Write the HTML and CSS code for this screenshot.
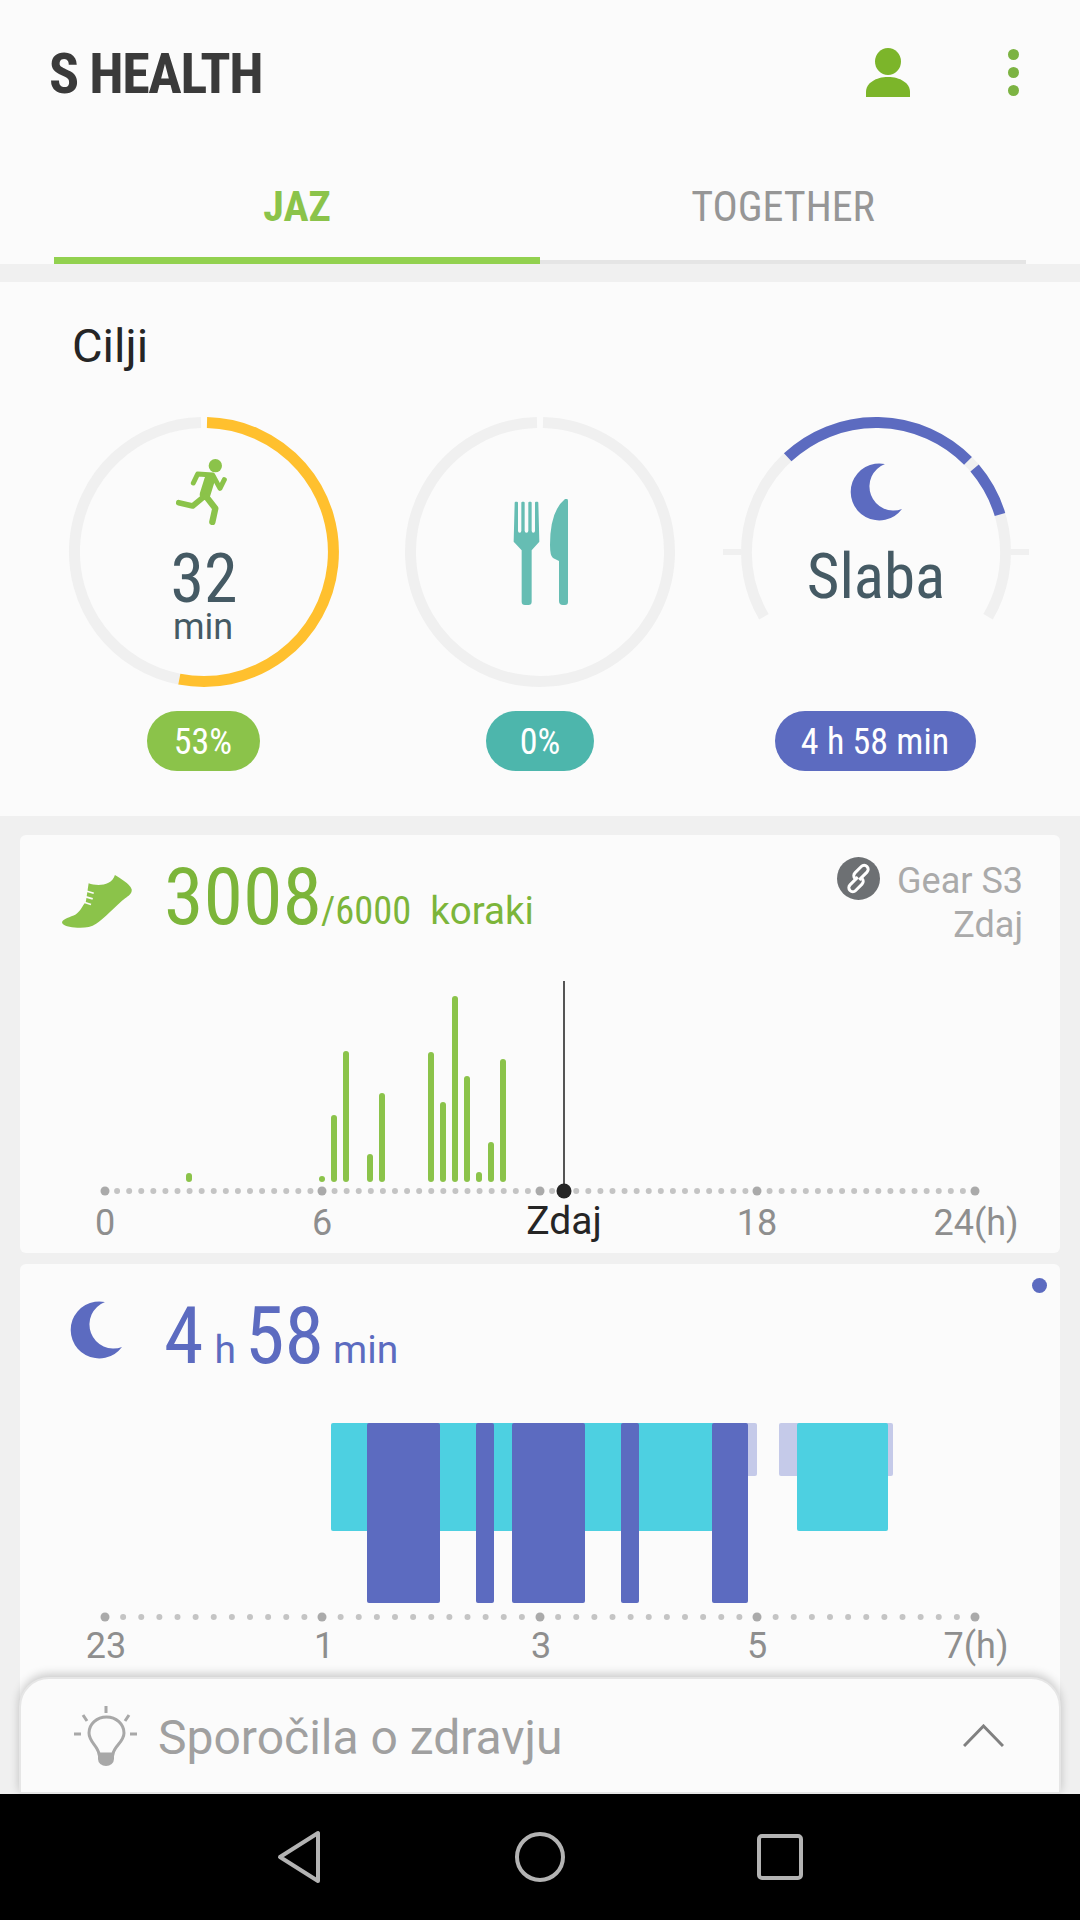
FILE: index.html
```html
<!DOCTYPE html>
<html lang="en">
<head>
  <meta charset="UTF-8" />
  <meta name="viewport" content="width=device-width, initial-scale=1.0" />
  <title>S Health</title>
  <link rel="stylesheet" href="styles.css">
</head>
<body>
  <div class="screen">
    <main class="content">
      <header class="topbar">
        <h1 class="title">S HEALTH</h1>
        <svg class="icon-profile" viewBox="866 48 44 49">
          <ellipse cx="888" cy="61.5" rx="13" ry="13.5" />
          <path d="M866 97 V92 C866 83 876 77 888 77 C900 77 910 83 910 92 V97 Z" />
        </svg>
        <div class="more"><span></span><span></span><span></span></div>
      </header>

      <nav class="tabs">
        <div class="tab active">JAZ</div>
        <div class="tab">TOGETHER</div>
      </nav>

      <section class="goals">
        <h2>Cilji</h2>
        <div class="rings">
          <div class="goal">
            <div class="ring">
              <svg viewBox="-153 -135 306 270" width="306" height="270">
                <path class="track" d="M-24.7 127.1 A129.5 129.5 0 0 1 -3 -129.5" />
                <path class="arc-yellow" d="M3 -129.5 A129.5 129.5 0 1 1 -24.7 127.1" />
              </svg>
              <div class="ring-body">
                <svg class="icon-run" viewBox="405 178 153 198">
                  <circle cx="523" cy="198" r="20" fill="#8bc34a" />
                  <path class="limb" stroke-width="15" d="M457 250 L470 223 L515 226 L537 266 L550 240" />
                  <path class="limb" stroke-width="32" d="M506 240 L492 285" />
                  <path class="limb" stroke-width="17" d="M490 290 L455 319 L413 309" />
                  <path class="limb" stroke-width="19" d="M495 290 L523 326 L514 367" />
                </svg>
                <div class="num cond">32</div>
                <div class="unit">min</div>
              </div>
            </div>
            <div class="pill pill-green cond">53%</div>
          </div>

          <div class="goal">
            <div class="ring">
              <svg viewBox="-153 -135 306 270" width="306" height="270">
                <path class="track" d="M3 -129.5 A129.5 129.5 0 1 1 -3 -129.5" />
              </svg>
              <div class="ring-body center">
                <svg class="icon-food" viewBox="513 499 55 106">
                  <g transform="translate(513 499) scale(.3333) translate(-1418 -297)">
                    <path d="M1423 308 Q1423 305 1426 305 H1430 Q1433 305 1433 308 V392 Q1433 398 1438 398 Q1443 398 1443 392 V308 Q1443 305 1446 305 H1450 Q1453 305 1453 308 V392 Q1453 398 1458.5 398 Q1464 398 1464 392 V308 Q1464 305 1467 305 H1471 Q1474 305 1474 308 V392 Q1474 398 1479 398 Q1484 398 1484 392 V308 Q1484 305 1487 305 H1491 Q1494 305 1494 308 L1497 425 L1474 451 V605 Q1474 615 1464 615 H1454 Q1444 615 1444 605 V451 L1420 425 Z" />
                  </g>
                  <path d="M568 501 Q568 498 565 499 Q550 511 550 545 Q550 556 553 558 L559 561 V601 Q559 605 563 605 H565 Q568 605 568 602 Z" />
                </svg>
              </div>
            </div>
            <div class="pill pill-teal cond">0%</div>
          </div>

          <div class="goal">
            <div class="ring">
              <svg viewBox="-153 -135 306 270" width="306" height="270">
                <path class="track" d="M-112.1 64.8 A129.5 129.5 0 1 1 112.1 64.8" />
                <path class="tick" d="M-153 0 H-135 M135 0 H153" />
                <path class="arc-blue" d="M-88.3 -94.7 A129.5 129.5 0 0 1 92 -91.1" />
                <path class="arc-blue" d="M98.6 -84 A129.5 129.5 0 0 1 124 -37.5" />
              </svg>
              <div class="ring-body sleep">
                <svg class="icon-moon" viewBox="849 463 53 59">
                  <path d="M884 464 A28.5 28.5 0 1 0 901 509 A24 24 0 0 1 884 464 Z" />
                </svg>
                <div class="sleep-word cond">Slaba</div>
              </div>
            </div>
            <div class="pill pill-blue cond">4 h 58 min</div>
          </div>
        </div>
      </section>

      <section class="card steps">
        <div class="card-head">
          <svg class="icon-shoe" viewBox="180 165 205 160" preserveAspectRatio="none">
            <path d="M335 165 C350 175 378 190 384 208 C386 220 375 228 365 235 C340 255 300 300 280 312 C265 323 245 325 225 324 C205 324 180 318 180 308 C182 296 205 292 220 284 C235 274 240 258 250 245 L258 190 C280 198 325 200 335 165 Z" />
            <path class="laces" d="M253 214 L273 220 M250 231 L270 237 M247 248 L265 254" />
          </svg>
          <div class="metric green">
            <span class="big cond">3008</span><span class="goal-num cond">/6000</span><span class="word">koraki</span>
          </div>
          <div class="source">
            <div class="source-line">
              <svg class="icon-link" viewBox="0 0 43 43">
                <circle cx="21.5" cy="21.5" r="21.5" fill="#6d7073" />
                <g transform="rotate(-45 21.5 21.5)">
                  <path d="M22 20 H11 a4 4 0 0 0 0 8 H20 a4 4 0 0 0 4 -4" />
                  <path d="M21 23 H32 a4 4 0 0 0 0 -8 H23 a4 4 0 0 0 -4 4" />
                </g>
              </svg>
              Gear S3
            </div>
            <div>Zdaj</div>
          </div>
        </div>
        <svg class="chart" viewBox="20 975 1040 278" width="1040" height="278">
          <g class="bars">
            <rect x="186" y="1173" width="6" height="9" rx="3" />
            <rect x="319" y="1176" width="6" height="6" rx="3" />
            <rect x="331" y="1115" width="6" height="67" rx="3" />
            <rect x="343" y="1051" width="6" height="131" rx="3" />
            <rect x="367" y="1154" width="6" height="28" rx="3" />
            <rect x="379" y="1093" width="6" height="89" rx="3" />
            <rect x="428" y="1052" width="6" height="130" rx="3" />
            <rect x="440" y="1102" width="6" height="80" rx="3" />
            <rect x="452" y="996" width="6" height="186" rx="3" />
            <rect x="464" y="1076" width="6" height="106" rx="3" />
            <rect x="476" y="1172" width="6" height="10" rx="3" />
            <rect x="488" y="1142" width="6" height="40" rx="3" />
            <rect x="500" y="1059" width="6" height="123" rx="3" />
          </g>
          <line class="dots" x1="105" y1="1191" x2="975" y2="1191" stroke-dasharray="0 12.083" />
          <g class="major">
            <circle cx="105" cy="1191" r="4.5" />
            <circle cx="322" cy="1191" r="4.5" />
            <circle cx="540" cy="1191" r="4.5" />
            <circle cx="757" cy="1191" r="4.5" />
            <circle cx="975" cy="1191" r="4.5" />
          </g>
          <line class="now-line" x1="564" y1="981" x2="564" y2="1191" />
          <circle class="now-dot" cx="564" cy="1191" r="7.5" />
          <g class="labels">
            <text x="105" y="1235">0</text>
            <text x="322" y="1235">6</text>
            <text class="now" x="564" y="1234">Zdaj</text>
            <text x="757" y="1235">18</text>
            <text x="976" y="1235">24(h)</text>
          </g>
        </svg>
      </section>

      <section class="card sleep-card">
        <span class="new-dot"></span>
        <div class="card-head tall">
          <svg class="icon-moon-small" viewBox="849 463 53 59">
            <path d="M884 464 A28.5 28.5 0 1 0 901 509 A24 24 0 0 1 884 464 Z" />
          </svg>
          <div class="metric blue">
            <span class="big cond">4</span><span class="word small">h</span><span class="big cond gap">58</span><span class="word small tight">min</span>
          </div>
        </div>
        <svg class="chart" viewBox="20 1410 1040 260" width="1040" height="260">
          <g class="light">
            <rect x="740" y="1423" width="17" height="53" rx="2" />
            <rect x="779" y="1423" width="114" height="53" rx="2" />
          </g>
          <g class="shallow">
            <rect x="331" y="1423" width="400" height="108" rx="2" />
            <rect x="797" y="1423" width="91" height="108" rx="2" />
          </g>
          <g class="deep">
            <rect x="367" y="1423" width="73" height="180" rx="2" />
            <rect x="476" y="1423" width="18" height="180" rx="2" />
            <rect x="512" y="1423" width="73" height="180" rx="2" />
            <rect x="621" y="1423" width="18" height="180" rx="2" />
            <rect x="712" y="1423" width="36" height="180" rx="2" />
          </g>
          <line class="dots" x1="105" y1="1617" x2="975" y2="1617" stroke-dasharray="0 18.125" />
          <g class="major">
            <circle cx="105" cy="1617" r="4.5" />
            <circle cx="322" cy="1617" r="4.5" />
            <circle cx="540" cy="1617" r="4.5" />
            <circle cx="757" cy="1617" r="4.5" />
            <circle cx="975" cy="1617" r="4.5" />
          </g>
          <g class="labels">
            <text x="106" y="1658">23</text>
            <text x="324" y="1658">1</text>
            <text x="541" y="1658">3</text>
            <text x="757" y="1658">5</text>
            <text x="976" y="1658">7(h)</text>
          </g>
        </svg>
      </section>

      <aside class="sheet">
        <svg class="icon-bulb" viewBox="72 1706 63 60">
          <path class="bulb-line" d="M97 1754 C96 1746 87 1742 87 1733 A17.5 16 0 0 1 122 1733 C122 1742 112 1746 111 1754 Z" />
          <path class="bulb-line" d="M104 1706 V1713 M81 1715 L85 1721 M127 1715 L123 1721 M72 1734 H79 M128 1734 H135" />
          <path class="bulb-base" d="M96 1754 H112 V1759 A8 7 0 0 1 96 1759 Z" />
        </svg>
        <span class="sheet-text">Sporočila o zdravju</span>
        <svg class="icon-chevron" viewBox="962 1724 41 23">
          <path d="M963 1746 L982.5 1726 L1002 1746" />
        </svg>
      </aside>
    </main>

    <footer class="navbar">
      <svg viewBox="0 0 46 54" width="46" height="54" class="nav-icon">
        <path d="M41 3 V51 L3 27 Z" />
      </svg>
      <svg viewBox="0 0 54 54" width="54" height="54" class="nav-icon">
        <circle cx="27" cy="27" r="23" />
      </svg>
      <svg viewBox="0 0 46 46" width="46" height="46" class="nav-icon">
        <rect x="2" y="2" width="42" height="42" rx="3" />
      </svg>
    </footer>
  </div>
</body>
</html>
```

FILE: styles.css
```css
* {
  box-sizing: border-box;
}
html, body {
  margin: 0;
  padding: 0;
}
body {
  width: 1080px;
  height: 1920px;
  overflow: hidden;
  font-family: Roboto, "Liberation Sans", sans-serif;
  background: #f0f0f0;
}
.screen {
  display: flex;
  flex-direction: column;
  height: 1920px;
}
.content {
  position: relative;
  flex: 1;
  overflow: hidden;
}
.cond {
  font-family: "Roboto Condensed", Roboto, sans-serif;
  font-stretch: condensed;
}

/* header */
.topbar {
  display: flex;
  align-items: center;
  height: 146px;
  padding-left: 49px;
  background: #fbfbfb;
}
.title {
  flex: 1;
  margin: 2px 0 0;
  font-family: "Roboto Condensed", Roboto, sans-serif;
  font-stretch: condensed;
  font-size: 56px;
  font-weight: 700;
  line-height: 56px;
  letter-spacing: -1.4px;
  color: #3a3a3a;
}
.icon-profile {
  width: 44px;
  height: 49px;
  margin-bottom: 2px;
  fill: #7cb52a;
}
.more {
  display: flex;
  flex-direction: column;
  gap: 7px;
  margin: 0 61px 2px 98px;
}
.more span {
  width: 11px;
  height: 11px;
  border-radius: 50%;
  background: #7cb342;
}
.tabs {
  display: flex;
  height: 118px;
  padding: 0 54px;
  background: #fbfbfb;
}
.tab {
  flex: 1;
  height: 118px;
  padding-top: 46px;
  border-bottom: 4px solid #e5e5e5;
  text-align: center;
  font-family: "Roboto Condensed", Roboto, sans-serif;
  font-stretch: condensed;
  font-size: 42px;
  line-height: 30px;
  color: #969696;
}
.tab.active {
  border-bottom: 7px solid #92d14f;
  font-weight: 700;
  color: #8bc34a;
}

/* goals */
.goals {
  height: 534px;
  margin-top: 18px;
  padding-top: 41px;
  background: #fbfbfb;
}
.goals h2 {
  margin: 0 0 48px 72px;
  font-size: 47px;
  font-weight: 400;
  line-height: 46px;
  color: #252525;
}
.rings {
  display: grid;
  grid-template-columns: repeat(3, 336px);
  padding: 0 36px;
}
.goal {
  display: flex;
  flex-direction: column;
  align-items: center;
}
.ring {
  position: relative;
  width: 306px;
  height: 270px;
}
.ring > svg {
  display: block;
  fill: none;
}
.track {
  fill: none;
  stroke: #f0f0f0;
  stroke-width: 11;
}
.tick {
  fill: none;
  stroke: #f0f0f0;
  stroke-width: 6;
}
.arc-yellow {
  fill: none;
  stroke: #ffc02e;
  stroke-width: 11;
}
.arc-blue {
  fill: none;
  stroke: #5c6bc0;
  stroke-width: 11;
}
.ring-body {
  position: absolute;
  inset: 0;
  display: flex;
  flex-direction: column;
  align-items: center;
  padding-top: 42px;
  color: #455a64;
}
.ring-body.center {
  padding-top: 82px;
}
.ring-body.sleep {
  padding-top: 46px;
}
.icon-run {
  width: 51px;
  height: 66px;
  margin-left: -5px;
}
.limb {
  fill: none;
  stroke: #8bc34a;
  stroke-linecap: round;
  stroke-linejoin: round;
}
.num {
  margin-top: 24px;
  font-size: 68px;
  line-height: 60px;
}
.unit {
  margin-right: 2px;
  font-size: 36px;
  line-height: 36px;
}
.icon-food {
  width: 55px;
  height: 106px;
  fill: #66bdb3;
}
.icon-moon {
  width: 53px;
  height: 59px;
  fill: #5c6bc0;
}
.sleep-word {
  margin-top: 24px;
  font-size: 63px;
  line-height: 62px;
}
.pill {
  height: 60px;
  margin-top: 24px;
  border-radius: 30px;
  text-align: center;
  font-size: 36px;
  line-height: 63px;
  color: #fff;
}
.pill-green {
  width: 113px;
  margin-left: -2px;
  background: #8bc34a;
}
.pill-teal {
  width: 108px;
  background: #4db6ac;
}
.pill-blue {
  width: 201px;
  margin-left: -2px;
  background: #5c6bc0;
}

/* cards */
.card {
  position: relative;
  margin: 19px 20px 0;
  border-radius: 6px;
  background: #fbfbfb;
}
.steps {
  height: 418px;
}
.sleep-card {
  height: 530px;
  margin-top: 11px;
}
.card-head {
  display: flex;
  height: 140px;
  padding: 40px 37px 0 42px;
}
.card-head.tall {
  height: 146px;
  padding-top: 37px;
}
.chart {
  display: block;
}
.icon-shoe {
  width: 70px;
  height: 53px;
  fill: #8bc34a;
}
.laces {
  fill: none;
  stroke: #fbfbfb;
  stroke-width: 5;
}
.metric {
  display: flex;
  align-items: baseline;
  height: 70px;
  margin: -8px 0 0 32px;
}
.metric.green {
  color: #7cb53a;
}
.metric.blue {
  color: #5c6bc0;
}
.big {
  font-size: 80px;
  line-height: 60px;
}
.goal-num {
  margin-left: -1px;
  font-size: 38.5px;
}
.word {
  margin-left: 19px;
  font-size: 38.5px;
}
.word.small {
  margin-left: 11px;
  font-size: 39px;
}
.word.small.tight {
  margin-left: 9px;
}
.big.gap {
  margin-left: 9px;
}
.source {
  margin-left: auto;
  margin-top: -16px;
  text-align: right;
  font-size: 36px;
  line-height: 44px;
  color: #aaa;
}
.source-line {
  display: flex;
  align-items: center;
  gap: 17px;
}
.icon-link {
  width: 43px;
  height: 43px;
  margin-top: -6px;
}
.icon-link path {
  fill: none;
  stroke: #fff;
  stroke-width: 3;
}
.bars {
  fill: #8bc34a;
}
.dots {
  stroke: #c4c4c4;
  stroke-width: 6;
  stroke-linecap: round;
}
.major {
  fill: #aaa;
}
.now-line {
  stroke: #555;
  stroke-width: 2;
}
.now-dot {
  fill: #252525;
}
.labels text {
  font-size: 36px;
  text-anchor: middle;
  fill: #8e8e8e;
}
.labels .now {
  font-size: 39px;
  fill: #252525;
}
.light {
  fill: #c5cae9;
}
.shallow {
  fill: #4dd0e1;
}
.deep {
  fill: #5c6bc0;
}
.new-dot {
  position: absolute;
  top: 14px;
  right: 13px;
  width: 15px;
  height: 15px;
  border-radius: 50%;
  background: #5c6bc0;
}
.icon-moon-small {
  width: 53px;
  height: 59px;
  margin-left: 8px;
  fill: #5c6bc0;
}
.sleep-card .metric {
  margin: 5px 0 0 41px;
}

/* bottom sheet */
.sheet {
  position: absolute;
  left: 19px;
  right: 19px;
  bottom: 0;
  display: flex;
  align-items: center;
  height: 117px;
  padding: 0 55px 0 53px;
  border: 2px solid #e6e6e6;
  border-radius: 30px 30px 0 0;
  background: #fbfbfb;
  box-shadow: 0 -3px 10px rgba(0, 0, 0, 0.2);
}
.icon-bulb {
  width: 63px;
  height: 60px;
}
.bulb-line {
  fill: none;
  stroke: #a8a8a8;
  stroke-width: 3;
}
.bulb-base {
  fill: #a8a8a8;
}
.sheet-text {
  flex: 1;
  margin: 3px 0 0 21px;
  font-size: 48px;
  color: #a0a0a0;
}
.icon-chevron {
  width: 41px;
  height: 23px;
  fill: none;
  stroke: #808080;
  stroke-width: 3;
}

/* nav bar */
.navbar {
  display: flex;
  align-items: center;
  justify-content: center;
  gap: 190px;
  height: 126px;
  background: #000;
}
.nav-icon {
  fill: none;
  stroke: #b3b3b3;
  stroke-width: 4;
  stroke-linejoin: round;
}
```
